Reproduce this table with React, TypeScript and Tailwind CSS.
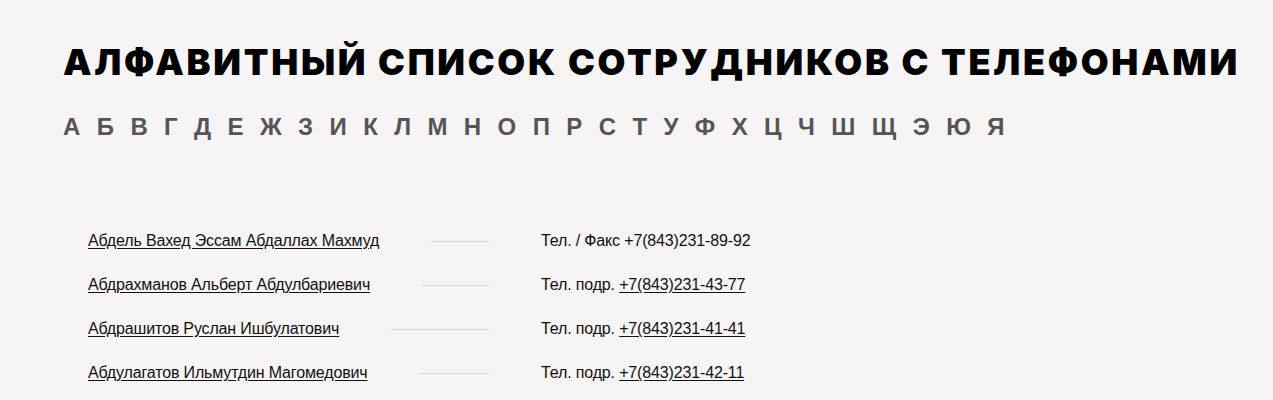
const letters = ['А', 'Б', 'В', 'Г', 'Д', 'Е', 'Ж', 'З', 'И', 'К', 'Л', 'М', 'Н', 'О', 'П', 'Р', 'С', 'Т', 'У', 'Ф', 'Х', 'Ц', 'Ч', 'Ш', 'Щ', 'Э', 'Ю', 'Я']

interface Employee {
  name: string
  label: string
  phone: string
  linked: boolean
}

const employees: Employee[] = [
  { name: 'Абдель Вахед Эссам Абдаллах Махмуд', label: 'Тел. / Факс', phone: '+7(843)231-89-92', linked: false },
  { name: 'Абдрахманов Альберт Абдулбариевич', label: 'Тел. подр.', phone: '+7(843)231-43-77', linked: true },
  { name: 'Абдрашитов Руслан Ишбулатович', label: 'Тел. подр.', phone: '+7(843)231-41-41', linked: true },
  { name: 'Абдулагатов Ильмутдин Магомедович', label: 'Тел. подр.', phone: '+7(843)231-42-11', linked: true },
]

export default function App() {
  return (
    <div className="min-h-[400px] bg-[#f6f4f5] pl-[63px] pt-[40px] font-['Liberation_Sans',Arial,sans-serif]">
      <h1 className="font-['Inter',sans-serif] text-[36px] font-black leading-[44px] tracking-[2.7px] text-black">
        АЛФАВИТНЫЙ СПИСОК СОТРУДНИКОВ С ТЕЛЕФОНАМИ
      </h1>
      <nav className="mt-[28px] flex gap-[16.4px] text-[24px] font-bold leading-[30px] text-[#555555]">
        {letters.map((letter) => (
          <a key={letter} href="#">
            {letter}
          </a>
        ))}
      </nav>
      <div className="mt-[89px] flex flex-col gap-[24px] pl-[25px] text-[16px] leading-[20px] tracking-[-0.15px] text-[#111111]">
        {employees.map((emp) => (
          <div key={emp.name} className="flex items-center">
            <div className="flex w-[401px] items-center gap-[52px]">
              <a href="#" className="shrink-0 underline underline-offset-2">
                {emp.name}
              </a>
              <div className="h-px flex-1 bg-[#d5d5d5]" />
            </div>
            <div className="ml-[52px]">
              {emp.label}{' '}
              {emp.linked ? (
                <a href="#" className="underline underline-offset-2">
                  {emp.phone}
                </a>
              ) : (
                <span>{emp.phone}</span>
              )}
            </div>
          </div>
        ))}
      </div>
    </div>
  )
}
